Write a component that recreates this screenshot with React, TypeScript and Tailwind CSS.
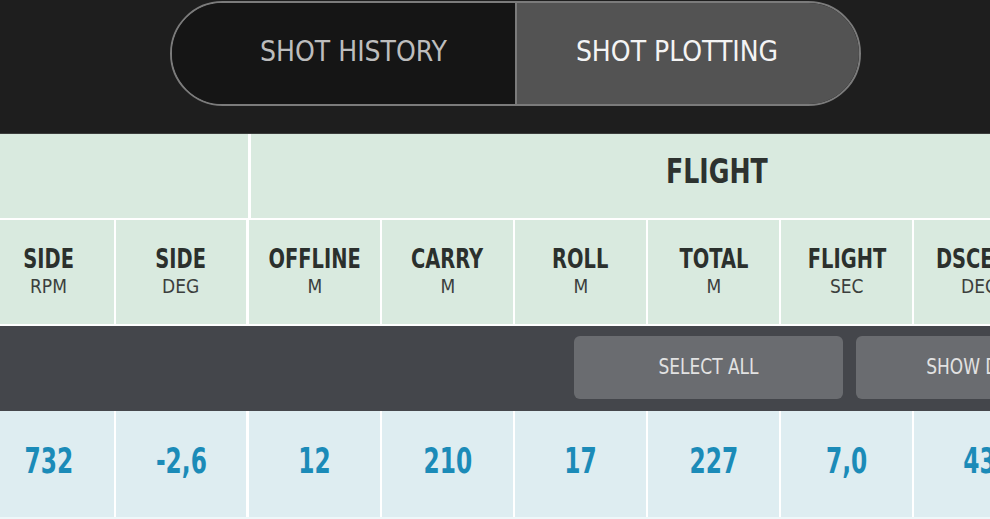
import React from "react";

const font = { fontFamily: '"Liberation Sans Narrow", "DejaVu Sans Condensed", "Liberation Sans", sans-serif' };

const columns = [
  { title: "SIDE", unit: "RPM", value: "732" },
  { title: "SIDE", unit: "DEG", value: "-2,6" },
  { title: "OFFLINE", unit: "M", value: "12" },
  { title: "CARRY", unit: "M", value: "210" },
  { title: "ROLL", unit: "M", value: "17" },
  { title: "TOTAL", unit: "M", value: "227" },
  { title: "FLIGHT", unit: "SEC", value: "7,0" },
  { title: "DSCENT", unit: "DEG", value: "43" },
];

export default function App() {
  return (
    <div className="w-[990px] h-[519px] overflow-hidden bg-[#eef7f9]" style={font}>
      {/* top toggle */}
      <div className="h-[134px] bg-[#1e1e1e] border-b border-[#3b3d3c] pt-[1px]">
        <div className="ml-[170px] w-[691px] h-[105px] rounded-full border-2 border-[#7b7b7b] overflow-hidden flex">
          <div className="w-[343px] bg-[#151515] flex items-center justify-center pl-[20px] pb-[4px] text-[28px] text-[#bdbdbd]">
            SHOT HISTORY
          </div>
          <div className="w-[2px] bg-[#7b7b7b]" />
          <div className="flex-1 bg-[#535353] flex items-center justify-center pr-[22px] pb-[4px] text-[28px] text-[#f4f4f4]">
            SHOT PLOTTING
          </div>
        </div>
      </div>

      {/* group header */}
      <div className="flex h-[86px] border-b-2 border-white bg-[#d9eadf]">
        <div className="w-[248px] shrink-0" />
        <div className="w-[3px] shrink-0 bg-white" />
        <div className="w-[931px] shrink-0 flex items-center justify-center pb-[8px]">
          <span className="text-[33px] font-bold text-[#2d322f] scale-x-[0.85]">FLIGHT</span>
        </div>
      </div>

      {/* column headers */}
      <div className="flex ml-[-17px] h-[106px] border-b-2 border-white bg-[#d9eadf]">
        {columns.map((c, i) => (
          <div
            key={i}
            className={`w-[133px] shrink-0 flex flex-col items-center justify-center pb-[2px] ${
              i === 1 ? "border-r-[3px]" : "border-r-2"
            } border-white`}
          >
            <span className="text-[27px] font-bold leading-[30px] text-[#2b302d] scale-x-[0.8]">{c.title}</span>
            <span className="text-[20px] leading-[24px] text-[#3b3f3d] scale-x-[0.95]">{c.unit}</span>
          </div>
        ))}
      </div>

      {/* action bar */}
      <div className="h-[85px] bg-[#44464b] flex items-center gap-[13px] pl-[574px] pb-[2px]">
        <div className="w-[269px] h-[63px] shrink-0 rounded-[6px] bg-[#6a6c70] flex items-center justify-center text-[21px] text-[#e2e2e2]">
          <span className="scale-x-[0.9]">SELECT ALL</span>
        </div>
        <div className="w-[269px] h-[63px] shrink-0 rounded-[6px] bg-[#6a6c70] flex items-center justify-center text-[21px] text-[#e2e2e2]">
          <span className="scale-x-[0.9]">SHOW DETAILS</span>
        </div>
      </div>

      {/* data row */}
      <div className="flex ml-[-17px] h-[106px] bg-[#deedf1]">
        {columns.map((c, i) => (
          <div
            key={i}
            className={`w-[133px] shrink-0 flex items-center justify-center pb-[6px] ${
              i === 1 ? "border-r-[3px]" : "border-r-2"
            } border-white`}
          >
            <span className="text-[36px] font-bold text-[#1b8bb8] scale-x-[0.72]">{c.value}</span>
          </div>
        ))}
      </div>
    </div>
  );
}
